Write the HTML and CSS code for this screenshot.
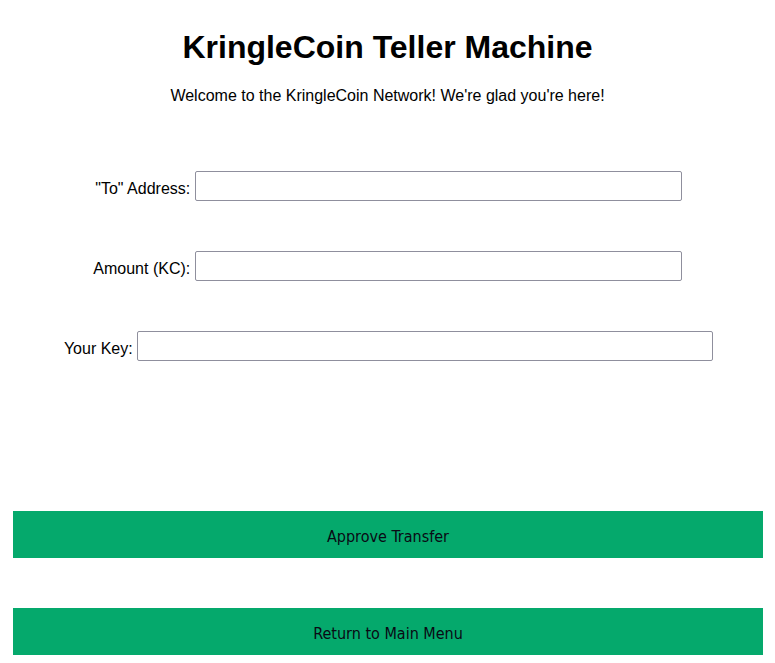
FILE: index.html
```html
<!DOCTYPE html>
<html>
<head>
<meta charset="utf-8">
<link rel="stylesheet" href="styles.css">
</head>
<body>
<h1 class="title">KringleCoin Teller Machine</h1>
<p class="welcome">Welcome to the KringleCoin Network! We're glad you're here!</p>
<form class="form">
  <div class="row"><label class="label">"To" Address:</label> <input class="field field-mid" type="text"></div>
  <div class="row row-tight"><label class="label">Amount (KC):</label> <input class="field field-mid" type="text"></div>
  <div class="row"><label class="label">Your Key:</label> <input class="field field-wide" type="text"></div>
</form>
<div class="actions">
  <button class="btn" type="button">Approve Transfer</button>
  <button class="btn" type="button">Return to Main Menu</button>
</div>
</body>
</html>
```
FILE: styles.css
```css
html, body {
  background: #ffffff;
}
body {
  margin: 8px;
  font-family: "Liberation Sans", Arial, sans-serif;
  color: #000;
}
.title {
  font-size: 32px;
  font-weight: bold;
  text-align: center;
  margin: 21px 0 0;
  line-height: 37px;
}
.welcome {
  font-size: 16px;
  text-align: center;
  margin: 21px 0 0;
  line-height: 18px;
}
.form {
  margin-top: 65px;
  display: flex;
  flex-direction: column;
  gap: 50px;
}
.row {
  text-align: center;
  height: 30px;
  font-size: 16px;
  line-height: 30px;
  padding-left: 2px;
}
.row-tight {
  padding-left: 0;
}
.label {
  display: inline-block;
  line-height: 20px;
  padding-top: 6px;
  vertical-align: middle;
}
.field {
  box-sizing: border-box;
  height: 30px;
  border: 1px solid #8f8f9d;
  border-radius: 2px;
  background: #fff;
  padding: 0 4px;
  margin: 0;
  vertical-align: middle;
  font-family: "Liberation Sans", Arial, sans-serif;
  font-size: 16px;
}
.field-mid {
  width: 487px;
}
.field-wide {
  width: 576px;
}
.actions {
  margin: 151px 4px 0 5px;
  display: flex;
  flex-direction: column;
  gap: 50px;
}
.btn {
  height: 47px;
  width: 100%;
  border: none;
  background: #05a96c;
  color: #0a0a14;
  font-family: "DejaVu Sans Condensed", "Liberation Sans Narrow", sans-serif;
  font-size: 16px;
  padding: 4px 0 0;
  margin: 0;
}
```
